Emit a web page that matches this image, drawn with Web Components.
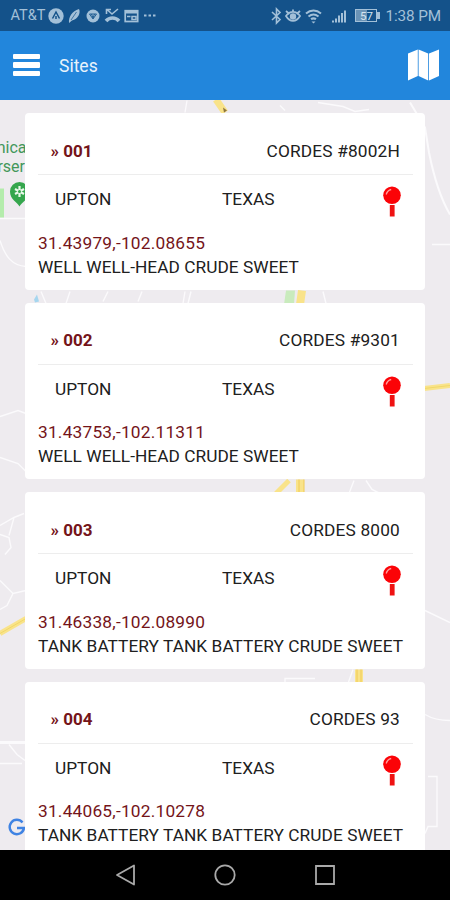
<!DOCTYPE html>
<html lang="en">
<head>
<meta charset="utf-8">
<title>Sites</title>
<style>
  body {
    margin: 0;
    width: 450px;
    height: 900px;
    overflow: hidden;
    font-family: Roboto, "Liberation Sans", sans-serif;
    --accent: #2286dc;
    --maroon: #741419;
  }
</style>
</head>
<body>
<sites-screen>
  <status-bar slot="top" carrier="AT&amp;T" battery="57" time="1:38 PM"></status-bar>
  <nav-bar slot="top">Sites</nav-bar>
  <site-card number="001" coords="31.43979,-102.08655">
    <span slot="name">CORDES #8002H</span>
    <span slot="county">UPTON</span>
    <span slot="state">TEXAS</span>
    <span slot="type">WELL WELL-HEAD CRUDE SWEET</span>
  </site-card>
  <site-card number="002" coords="31.43753,-102.11311">
    <span slot="name">CORDES #9301</span>
    <span slot="county">UPTON</span>
    <span slot="state">TEXAS</span>
    <span slot="type">WELL WELL-HEAD CRUDE SWEET</span>
  </site-card>
  <site-card number="003" coords="31.46338,-102.08990">
    <span slot="name">CORDES 8000</span>
    <span slot="county">UPTON</span>
    <span slot="state">TEXAS</span>
    <span slot="type">TANK BATTERY TANK BATTERY CRUDE SWEET</span>
  </site-card>
  <site-card number="004" coords="31.44065,-102.10278">
    <span slot="name">CORDES 93</span>
    <span slot="county">UPTON</span>
    <span slot="state">TEXAS</span>
    <span slot="type">TANK BATTERY TANK BATTERY CRUDE SWEET</span>
  </site-card>
  <android-keys slot="bottom"></android-keys>
</sites-screen>

<script>
customElements.define('sites-screen', class extends HTMLElement {
  constructor() {
    super()
    this.attachShadow({ mode: 'open' }).innerHTML = `
    <style>
    :host {
      display: flex;
      flex-direction: column;
      height: 900px;
    }
    main {
      position: relative;
      flex: 1;
      min-height: 0;
      overflow: hidden;
    }
    map-backdrop {
      position: absolute;
      inset: 0;
    }
    .list {
      position: relative;
      display: flex;
      flex-direction: column;
      gap: 13px;
      padding: 13.5px 25px 0;
    }
    </style>
    <slot name="top"></slot>
    <main>
      <map-backdrop></map-backdrop>
      <div class="list"><slot></slot></div>
    </main>
    <slot name="bottom"></slot>
    `
  }
})

customElements.define('status-bar', class extends HTMLElement {
  constructor() {
    super()
    this.attachShadow({ mode: 'open' }).innerHTML = `
    <style>
    :host {
      display: flex;
      align-items: center;
      box-sizing: border-box;
      height: 30.5px;
      padding: 1px 9px 0 10.5px;
      background: #14528a;
      color: #a3c0d8;
      font-size: 15px;
      line-height: 18px;
    }
    .carrier {
      width: 37px;
      font-size: 14.5px;
    }
    .grow {
      flex: 1;
    }
    svg {
      display: block;
      fill: none;
      stroke: currentColor;
    }
    .battery {
      display: flex;
      align-items: center;
      justify-content: center;
      width: 22px;
      height: 13px;
      margin-left: 8px;
      border: 1.5px solid currentColor;
      box-sizing: border-box;
      background: linear-gradient(90deg, #6b93b6 57%, transparent 57%);
      font-size: 11.5px;
      line-height: 10px;
    }
    .battery span {
      color: #d5e4f0;
    }
    .tip {
      width: 3px;
      height: 7px;
      background: currentColor;
    }
    .time {
      margin-left: 5px;
      font-size: 15.3px;
      letter-spacing: -.1px;
      white-space: nowrap;
    }
    </style>
    <span class="carrier"></span>
    <svg width="110" height="20" viewBox="0 0 110 20">
      <circle cx="8" cy="10" r="7.7" fill="currentColor" stroke="none"/>
      <path d="M4.5 12.5 8 6l3.5 6.5M8 10v3" stroke="#14528a" stroke-width="1.5"/>
      <path d="M21 17c-.5-6 3-12 10-14 2 4-1 10-7 11.500z" fill="currentColor" stroke="none"/>
      <path d="M23 14l5.500-8" stroke="#14528a" stroke-width=".7"/>
      <circle cx="45" cy="10" r="6.5" fill="currentColor" stroke="none"/>
      <path d="M41.500 8h7l-3.500 5zM43.500 8l1.500 4 1.500-4" stroke="#14528a" stroke-width=".9"/>
      <path d="M59 3.500 64 8l6-5M58.500 8V3.500H63" stroke-width="1.600"/>
      <path d="M58 15c3.500-4 9.500-4 13 0" stroke-width="3.600"/>
      <rect x="77.200" y="4.700" width="12.500" height="10.800" stroke-width="1.700"/>
      <path d="M77 6h13" stroke-width="3"/>
      <path d="M84 10.500h4v3h-4zM79 10.500h3.500" stroke-width="1.500"/>
      <path d="M96 9.500h2.500M100.500 9.500h2.500M105 9.500h2.500" stroke-width="2"/>
    </svg>
    <span class="grow"></span>
    <svg width="77" height="20" viewBox="0 0 77 20">
      <path d="M2 6l8 7.500-3.500 3.500V3L10 6.500 2 14" stroke-width="1.600"/>
      <path d="M16 10c4-5.500 10-5.500 14 0-4 6.500-10 6.500-14 0zM16 5l3.500 3M23 3.500v3M30 5l-3.500 3" stroke-width="1.800"/>
      <circle cx="23" cy="10.500" r="3.200" fill="currentColor" stroke="none"/>
      <path d="M36 7.500c4.500-4 10.500-4 15 0M38.500 10.500c3-2.500 7-2.500 10 0M41 13.200c1.500-1 3.500-1 5 0" stroke-width="2"/>
      <path d="M41.500 15.500h4l-2 2z" fill="currentColor" stroke="none"/>
      <path d="M63 16.500v-2M66 16.500v-4M69 16.500V9.500M72 16.500V7M75 16.500V4.500" stroke-width="2"/>
    </svg>
    <div class="battery"><span></span></div>
    <div class="tip"></div>
    <span class="time"></span>
    `
  }

  connectedCallback() {
    this.shadowRoot.querySelector('.carrier').textContent = this.getAttribute('carrier')
    this.shadowRoot.querySelector('.battery span').textContent = this.getAttribute('battery')
    this.shadowRoot.querySelector('.time').textContent = this.getAttribute('time')
  }
})

customElements.define('nav-bar', class extends HTMLElement {
  constructor() {
    super()
    this.attachShadow({ mode: 'open' }).innerHTML = `
    <style>
    :host {
      display: flex;
      align-items: center;
      box-sizing: border-box;
      height: 69px;
      padding: 0 11px 0 13px;
      background: var(--accent);
      color: #e8f3fc;
      font-size: 17.5px;
    }
    .menu {
      display: grid;
      gap: 3px;
      width: 26.5px;
      margin-right: 19.5px;
    }
    .menu i {
      height: 5.5px;
      border-radius: 1px;
      background: #fff;
    }
    .title {
      flex: 1;
      padding-top: 1px;
    }
    </style>
    <div class="menu"><i></i><i></i><i></i></div>
    <span class="title"><slot></slot></span>
    <svg width="31" height="32" viewBox="0 0 31 32" fill="#fff">
      <path d="M0 4.500 9.800 .5v26.500L0 31.500zM10.600 .5l9.600 4v27l-9.600-4.500zM21 4.500 31 .5v26.500l-10 4.500z"/>
    </svg>
    `
  }
})

customElements.define('map-backdrop', class extends HTMLElement {
  constructor() {
    super()
    // viewBox starts at the bottom edge of the nav bar
    this.attachShadow({ mode: 'open' }).innerHTML = `
    <style>
    :host {
      display: block;
      background: #eeebef;
    }
    svg {
      display: block;
      font-size: 16px;
    }
    .road {
      fill: none;
      stroke: #fbfafc;
      stroke-width: 1.4;
    }
    .highway {
      fill: none;
      stroke: #f9e38a;
      stroke-width: 5;
    }
    .place {
      fill: #43975a;
    }
    </style>
    <svg width="450" height="751" viewBox="0 99.500 450 751">
      <g class="road">
        <path d="M0 218h26M0 240c5 16 12 25 26 26M187 100l-2 12M280 105l5 5M318 102l25 4 12 5 14-2M432 244h18"/>
        <path d="M410 102l15 25 4 25q8 40 21 62" stroke-width="2"/>
        <path d="M0 416l18-6 8 3M0 457l18 6 8 8M0 525l14-8 10-4M14 517l-5 18M0 534l9 3 2 10-6 7M0 580l13 13 13-3M13 593l-6 12-7 4"/>
        <path d="M41 291l5 12M70 291l-4 12M108 291l-5 10M142 291l-4 10M185 291l-2 12M191 291l-3 12M323 291l3 12M354 480l-5 13M366 480l6 9 8 4M425 610l25 12"/>
        <path d="M0 742h25" stroke-width="3"/>
        <path d="M9 744l8 10 8 6M0 763h22M285 684v-6h30M353 669l-5 14M425 714q10 6 25 6M428 776h9v50h-9l-3 7"/>
      </g>
      <g class="highway">
        <path d="M0 633l26-15M424 388l26-3M276 493l13-13" />
        <path d="M216 99l9 13" stroke-width="7"/>
        <path d="M302 290l-2 14M300 479v14M359 669v14" stroke-width="8"/>
      </g>
      <path d="M0 633l26-15M424 388l26-3" fill="none" stroke="#eed45f" stroke-width=".8"/>
      <path d="M299 479v14M304 479v14M357 669v14M361 669v14" fill="none" stroke="#f0ca54"/>
      <path d="M223 107l4 3-3 2z" fill="#8d743e"/>
      <path d="M286 290h9l-1 14h-10z" fill="#c9ebbd"/>
      <path d="M0 188h4v29H0z" fill="#b4ecac"/>
      <path d="M37 294l2 7-4 1-1-3z" fill="#a6d6ef"/>
      <text class="place" x="26.500" y="152" text-anchor="end">nica</text>
      <text class="place" x="25" y="171" text-anchor="end">rser</text>
      <path d="M19.500 206c-2-4-9.500-7-9.500-15a9.500 9.500 0 0 1 19 0c0 8-7.500 11-9.500 15z" fill="#35a64d"/>
      <path d="M19.500 185.500v11M15 188.500l9 5M24 188.500l-9 5" stroke="#e9f8ea" stroke-width="2.200"/>
      <circle cx="19.500" cy="191" r="1.500" fill="#35a64d"/>
      <path d="M22.500 822a7.200 7.200 0 1 0 1.500 5.500h-7" fill="none" stroke="#3f83e3" stroke-width="2.400"/>
    </svg>
    `
  }
})

customElements.define('push-pin', class extends HTMLElement {
  constructor() {
    super()
    this.attachShadow({ mode: 'open' }).innerHTML = `
    <style>
    :host {
      display: block;
      width: 18px;
      height: 32px;
    }
    svg {
      display: block;
    }
    </style>
    <svg width="18" height="32" viewBox="0 0 18 32">
      <path d="M6.800 19h4.800v11.500H6.800z" fill="#ef1212"/>
      <circle cx="9" cy="9.300" r="8.800" fill="#fb0307"/>
      <path d="M3.200 8.500q1-4 5-5" fill="none" stroke="#ff9c9c" stroke-width="1.300"/>
    </svg>
    `
  }
})

customElements.define('site-card', class extends HTMLElement {
  constructor() {
    super()
    this.attachShadow({ mode: 'open' }).innerHTML = `
    <style>
    :host {
      display: block;
      flex: none;
      box-sizing: border-box;
      height: 176.6px;
      padding: 0 12.5px 0 13px;
      border-radius: 4px;
      background: #fff;
      color: #202020;
      font-size: 17.3px;
      line-height: 24px;
      white-space: nowrap;
    }
    .head {
      display: flex;
      justify-content: space-between;
      box-sizing: border-box;
      height: 62px;
      padding: 25.5px 12.5px 0;
      border-bottom: 1.5px solid #ededed;
      letter-spacing: .17px;
    }
    .number {
      color: var(--maroon);
      font-size: 17px;
      font-weight: bold;
      letter-spacing: 0;
    }
    .place {
      display: grid;
      grid-template-columns: 167px 1fr 18px;
      height: 55.5px;
      padding: 0 12px 0 17px;
      line-height: 49px;
      box-sizing: border-box;
    }
    push-pin {
      margin-top: 11px;
    }
    .coords {
      color: var(--maroon);
      letter-spacing: .22px;
    }
    .type {
      letter-spacing: .04px;
    }
    </style>
    <div class="head">
      <span class="number"></span>
      <slot name="name"></slot>
    </div>
    <div class="place">
      <slot name="county"></slot>
      <slot name="state"></slot>
      <push-pin></push-pin>
    </div>
    <div class="coords"></div>
    <div class="type"><slot name="type"></slot></div>
    `
  }

  connectedCallback() {
    this.shadowRoot.querySelector('.number').textContent = '» ' + this.getAttribute('number')
    this.shadowRoot.querySelector('.coords').textContent = this.getAttribute('coords')
  }
})

customElements.define('android-keys', class extends HTMLElement {
  constructor() {
    super()
    this.attachShadow({ mode: 'open' }).innerHTML = `
    <style>
    :host {
      display: flex;
      align-items: center;
      justify-content: center;
      gap: 78px;
      height: 50px;
      background: #000;
    }
    svg {
      fill: none;
      stroke: #a9a9a9;
      stroke-width: 1.8;
    }
    </style>
    <svg width="22" height="22"><path d="M20 1.500v19L3 11z" stroke-linejoin="round"/></svg>
    <svg width="22" height="22"><circle cx="11" cy="11" r="9.700"/></svg>
    <svg width="22" height="22"><path d="M2 2h18v18H2z"/></svg>
    `
  }
})
</script>
</body>
</html>
